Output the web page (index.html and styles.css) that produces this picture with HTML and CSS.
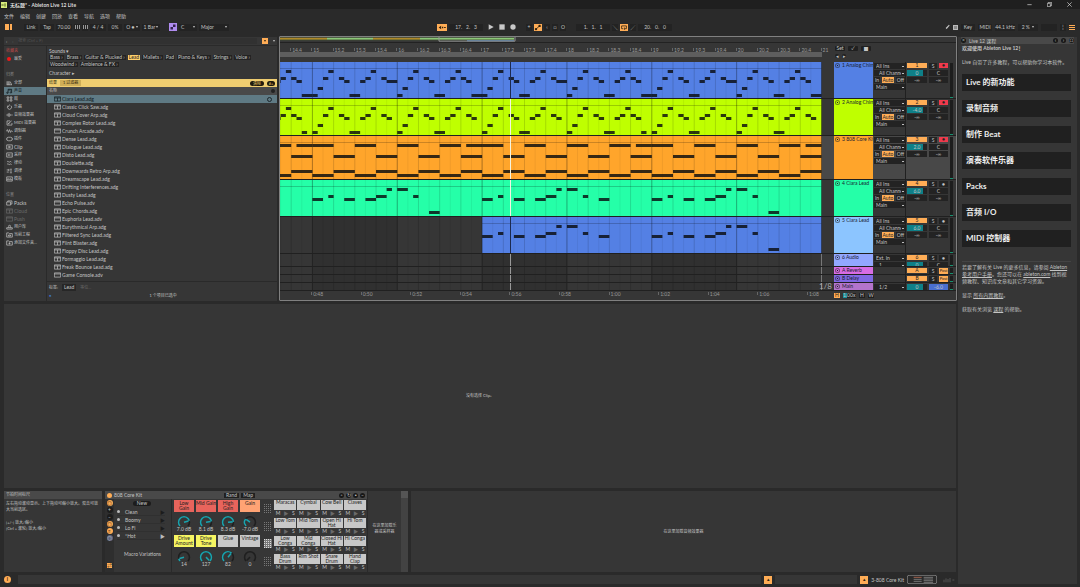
FILE: index.html
```html
<!DOCTYPE html>
<html lang="zh-CN">
<head>
    <meta charset="UTF-8">
    <meta name="viewport" content="width=device-width, initial-scale=1.0">
    <title>无标题* - Ableton Live 12 Lite</title>
    <link rel="stylesheet" href="styles.css">
</head>
<body>
    <svg class="symbols">
        <symbol id="i-all" viewBox="0 0 20 16"><path d="M3 3v10M6 3v10M9 3v10M12 4l4 9M2 13h15"/></symbol>
        <symbol id="i-sound" viewBox="0 0 20 16"><path d="M6 13V3h10v9M6 5h10"/><circle cx="4" cy="13" r="2"/><circle cx="14" cy="12" r="2"/></symbol>
        <symbol id="i-drum" viewBox="0 0 20 16"><path d="M3 2h5v4H3zM12 2h5v4h-5zM3 10h5v4H3zM12 10h5v4h-5z"/></symbol>
        <symbol id="i-inst" viewBox="0 0 20 16"><path d="M6 4a6 6 0 1 0 8 0M6 4l1 4M10 1v3"/></symbol>
        <symbol id="i-fx" viewBox="0 0 20 16"><path d="M1 8h4M6 4v8M9 2v12M12 5v6M15 8h4"/></symbol>
        <symbol id="i-midi" viewBox="0 0 20 16"><path d="M12 2H3v12h14V8M6 10l10-8M6 10h4"/></symbol>
        <symbol id="i-mod" viewBox="0 0 20 16"><path d="M1 9l3-5 3 8 3-8 3 8 3-5 3 3"/></symbol>
        <symbol id="i-plug" viewBox="0 0 20 16"><path d="M7 3h6a5 5 0 0 1 0 10H7a5 5 0 0 1 0-10zM1 8h2M17 8h2"/></symbol>
        <symbol id="i-clip" viewBox="0 0 20 16"><path d="M2 2h16v12H2zM8 5l5 3-5 3z"/></symbol>
        <symbol id="i-sample" viewBox="0 0 20 16"><path d="M2 2h16v12H2zM5 8h2M8 5v6M11 6v4M14 8h2"/></symbol>
        <symbol id="i-groove" viewBox="0 0 20 16"><path d="M3 5c3-5 5 3 8 0s4 0 5 1M3 12c3-5 5 3 8 0s4 0 5 1"/></symbol>
        <symbol id="i-tune" viewBox="0 0 20 16"><path d="M2 5h6M11 3h6M2 11h6M11 8h6M11 13h6M8 2v6"/></symbol>
        <symbol id="i-tpl" viewBox="0 0 20 16"><path d="M2 2h16v12H2zM2 10h16M6 5v3M12 5v3"/></symbol>
        <symbol id="i-packs" viewBox="0 0 20 16"><path d="M2 5h11v9H2zM5 5V2h12v9h-4"/></symbol>
        <symbol id="i-user" viewBox="0 0 20 16"><path d="M2 10h16v4H2zM7 10c3-2 0-3 0-5s6-3 6 0-3 3 0 5"/></symbol>
        <symbol id="i-folder" viewBox="0 0 20 16"><path d="M2 2h6l2 2h8v10H2zM7 8h6v3H7z"/></symbol>
        <symbol id="i-add" viewBox="0 0 20 16"><path d="M2 2h6l2 2h8v10H2zM10 6v6M7 9h6"/></symbol>
        <symbol id="i-rack" viewBox="0 0 20 16"><path d="M1 2h18v12H1zM1 5h18M10 5v9"/></symbol>
        <symbol id="i-preset" viewBox="0 0 20 16"><path d="M1 2h18v12H1zM1 5h18"/></symbol>
    </svg>

    <header>
        <div class="titlebar">
            <svg class="logo" viewBox="0 0 18 18"><path fill="#d8ec7c" d="M0 0h18v18H0z"/><path stroke="#5c6a2c" stroke-width="2" d="M3 6v6M6 6v6M9 6h6M9 9h6M9 12h6"/></svg>
            <h1>无标题* - Ableton Live 12 Lite</h1>
            <div class="window-buttons">
                <button aria-label="最小化"><svg viewBox="0 0 15 15"><path d="M1 8h13"/></svg></button>
                <button aria-label="还原"><svg viewBox="0 0 15 15"><path d="M1 4h9v10H1zM4 4V1h10v10h-4"/></svg></button>
                <button aria-label="关闭"><svg viewBox="0 0 15 15"><path d="M1 1l13 13M14 1L1 14"/></svg></button>
            </div>
        </div>
        <nav class="menubar">
            <button>文件</button><button>编辑</button><button>创建</button><button>回放</button><button>查看</button><button>导航</button><button>选项</button><button>帮助</button>
        </nav>
        <div class="transport">
            <div class="group group-left">
                <button class="layout-btn" aria-label="浏览器"></button>
                <button class="box w14">Link</button>
                <button class="box w14">Tap</button>
                <span class="box w16">70.00</span>
                <button class="box nudge" aria-label="减慢"></button>
                <button class="box nudge" aria-label="加快"></button>
                <span class="box w16">4 / 4</span>
                <span class="box w14">0%</span>
                <button class="box w16">O ● <i class="down"></i></button>
                <button class="box w18">1 Bar <i class="down"></i></button>
                <button class="scale-btn" aria-label="音阶"><svg viewBox="0 0 16 16"><path fill="#33234d" d="M3 8h5v5H3zM8 3h5v5H8z"/></svg></button>
                <button class="box w18 spread">C <i class="down"></i></button>
                <button class="box w30 spread">Major <i class="down"></i></button>
            </div>
            <div class="group">
                <button class="on follow" aria-label="跟随"><svg viewBox="0 0 24 16"><path fill="#30210d" d="M4 8l6-4v8zM12 6h3v4h-3zM17 7h4v2h-4z"/></svg></button>
                <span class="box w34">17. &nbsp; 2. &nbsp; 3</span>
                <button class="play" aria-label="播放"><svg viewBox="0 0 18 18"><path d="M2 1l15 8-15 8z"/></svg></button>
                <button class="play" aria-label="停止"><svg viewBox="0 0 18 18"><path d="M1 1h16v16H1z"/></svg></button>
                <button class="play" aria-label="录音"><svg viewBox="0 0 18 18"><circle cx="9" cy="9" r="8"/></svg></button>
                <button class="box gap-left">+</button>
                <button class="on" aria-label="自动化"><svg viewBox="0 0 20 16"><path fill="none" stroke="#30210d" stroke-width="2" d="M4 13L15 3"/><circle fill="#30210d" cx="5" cy="12" r="3"/><circle fill="#30210d" cx="14" cy="4" r="3"/></svg></button>
                <button class="box">‹</button>
                <button class="box">□</button>
                <button class="box">O</button>
                <span class="box w34 gap-left">1. &nbsp; 1. &nbsp; 1</span>
                <button class="box">╲</button>
                <button class="on" aria-label="循环"><svg viewBox="0 0 20 16"><path fill="none" stroke="#30210d" stroke-width="2" d="M8 11H4V4h12v7h-4M11 8v6"/></svg></button>
                <button class="box">╱</button>
                <span class="box w34">20. &nbsp; 0. &nbsp; 0</span>
            </div>
            <div class="group group-right">
                <button class="pen" aria-label="绘制"><svg viewBox="0 0 14 16"><path d="M2 14l2-5 7-7 2 2-7 8z"/></svg></button>
                <button class="keys" aria-label="键盘"></button>
                <button class="box w14">Key</button>
                <button class="box w14">MIDI</button>
                <button class="box w20">44.1 kHz</button>
                <button class="box w20">2 % &nbsp;<i class="down"></i></button>
                <span class="box w16"></span>
                <button class="box">¦</button>
                <button class="hamburger" aria-label="帮助视图"><svg viewBox="0 0 18 15"><path fill="#ffad56" d="M0 0h18v3H0zM0 6h18v3H0zM0 12h18v3H0z"/></svg></button>
            </div>
        </div>
    </header>

    <div class="workspace">
        <main>
            <div class="top-row">
                <section class="browser">
                    <div class="search">
                        <button>‹</button><button class="dim">›</button>
                        <input type="text" aria-label="搜索" placeholder="搜索 (Ctrl + F)">
                        <button class="filter-btn" aria-label="筛选"><i class="down"></i></button>
                        <button aria-label="更多"><i class="down"></i></button>
                    </div>
                    <div class="browser-body">
                        <aside class="sidebar">
                            <h2 class="red">收藏夹</h2>
                            <a href="#" class="side-link"><i class="fav"></i>最爱</a>
                            <h2 class="section">归类</h2>
                            <div id="categories"></div>
                            <h2 class="section">位置</h2>
                            <div id="places"></div>
                        </aside>
                        <div class="results">
                            <div class="filters">
                                <h2>Sounds ▾</h2>
                                <div class="chips">
                                    <button>Bass ›</button><button>Brass ›</button><button>Guitar &amp; Plucked ›</button><button class="active">Lead</button><button>Mallets ›</button><button>Pad</button><button>Piano &amp; Keys ›</button><button>Strings ›</button><button>Voice ›</button><button>Woodwind ›</button><button>Ambience &amp; FX ›</button>
                                </div>
                                <h2>Character ▸</h2>
                            </div>
                            <div class="result-bar">
                                <span>结果</span><span class="count">1 过滤器</span>
                                <button class="clear">清除</button><button>#+</button>
                            </div>
                            <div class="name-head"><span>名称</span><i class="dot"></i></div>
                            <ul class="files" id="files"></ul>
                            <div class="tags"><span>标签:</span><b>Lead</b><span class="dim">等位...</span></div>
                            <div class="status"><button aria-label="试听">●</button><span>1 个项目已选中</span></div>
                        </div>
                    </div>
                </section>

                <section class="arrangement">
                    <svg class="overview" viewBox="0 0 676 6" preserveAspectRatio="none">
                        <path fill="#4a5b38" d="M0 1h234v3H0z"/>
                        <path fill="#b08a28" d="M0 1h47v2H0zM93 1h47v2H93z"/>
                        <path fill="#8cc878" d="M47 1h46v2H47zM140 1h94v2h-94z"/>
                        <path fill="#5b8cc0" d="M187 4h47v1h-47z"/>
                        <path fill="none" stroke="#999" d="M159 0v5h76V0"/>
                    </svg>
                    <div class="ruler-row">
                        <div class="rulers">
                            <div class="ruler" id="beats"></div>
                            <div class="loop"></div>
                        </div>
                        <div class="locators">
                            <button>Set</button><button>✓</button><button>■</button>
                            <div><button>◂</button><button>▸</button></div>
                        </div>
                    </div>
                    <div id="tracks" class="tracks"></div>
                    <div class="ruler-row">
                        <div class="ruler time" id="seconds"></div>
                        <div class="zoom-row"><button class="on">H</button><span class="speed">1.00x</span><button>H</button><button>W</button></div>
                    </div>
                    <span class="grid-size">1/8</span>
                </section>
            </div>

            <section class="clip-view">没有选择 Clip。</section>

            <div class="devices">
                <section class="info">
                    <h2>节拍时间标尺</h2>
                    <p>左右拖动滚动显示。上下拖动可缩小放大。双击可放大当前选区。</p>
                    <p>[+/-] 放大/缩小<br>[Ctrl + 滚轮] 放大/缩小</p>
                </section>
                <section class="rack">
                    <div class="device">
                        <div class="device-head">
                            <i class="led"></i><h2>808 Core Kit</h2>
                            <button class="rand">Rand</button><button>Map</button>
                            <div class="head-icons"><button aria-label="比较">◦</button><button aria-label="热交换">↻</button><button aria-label="保存">▪</button><button aria-label="更多">–</button></div>
                        </div>
                        <div class="device-body">
                            <div class="rail">
                                <button class="r-on">◎</button><button>+</button><button>–</button><button class="r-on">◎</button><button class="r-on">≡</button><button class="r-blue">◎</button><button class="r-sq">⇄</button>
                            </div>
                            <div class="variations">
                                <button class="new">New</button>
                                <ul>
                                    <li><i></i>Clean<b>▶</b></li>
                                    <li><i></i>Boomy<b>▶</b></li>
                                    <li><i></i>Lo Fi<b>▶</b></li>
                                    <li><i></i>*Hot<b class="lit">▶</b></li>
                                </ul>
                                <p>Macro Variations</p>
                            </div>
                            <div class="macros" id="macros"></div>
                            <div class="pad-map"><i></i><i></i><i class="lit"></i><i></i></div>
                            <div class="pads" id="pads"></div>
                        </div>
                    </div>
                    <p class="drop">在这里加载乐器或采样器</p>
                    <div class="rack-end"></div>
                </section>
                <section class="effects">在这里加载音频效果器</section>
            </div>
        </main>

        <aside class="lessons">
            <div class="lessons-head"><button aria-label="关闭">×</button><h2>Live 12 课程</h2><button>‹</button><button>›</button><button>⌂</button></div>
            <div class="lessons-body">
                <h3>欢迎使用 Ableton Live 12！</h3>
                <p>Live 自带了许多教程，可以帮助你学习本软件。</p>
                <nav>
                    <a href="#">Live 的新功能</a>
                    <a href="#">录制音频</a>
                    <a href="#">制作 Beat</a>
                    <a href="#">演奏软件乐器</a>
                    <a href="#">Packs</a>
                    <a href="#">音频 I/O</a>
                    <a href="#">MIDI 控制器</a>
                </nav>
                <div class="more">
                    <p>若要了解有关 Live 的更多信息，请参阅 <a href="#">Ableton 参考用户手册</a>。您还可以在 <a href="#">ableton.com</a> 找到视频教程、知识库文章和其它学习资源。</p>
                    <p>显示 <a href="#">所有内置教程</a>。</p>
                    <p>获取有关浏览 <a href="#">课程</a> 的帮助。</p>
                </div>
            </div>
        </aside>
    </div>

    <footer>
        <button class="info-btn">i</button>
        <div class="message"></div>
        <button class="view-btn" aria-label="Clip 视图">▴</button>
        <div class="message short"></div>
        <button class="view-btn" aria-label="设备视图">▴</button>
        <span>3-808 Core Kit</span>
        <svg class="chain" viewBox="0 0 90 27"><rect x="1" y="1" width="88" height="25" rx="5"/><path stroke="#d9785a" d="M20 7h24"/><path d="M20 13h24M20 19h24M50 7h28M50 12h28M50 17h28M50 22h28"/></svg>
        <svg class="bars" viewBox="0 0 36 18"><path d="M3 16V8M9 16V4M15 16V6M21 16V3M28 9h6"/></svg>
    </footer>
    <script src="script.js"></script>
</body>
</html>
```
FILE: styles.css
```css
:root{
    --bg : #2a2a2a;
    --panel : #363636;
    --head : #494949;
    --dark : #1f1f1f;
    --text : #c4c4c4;
    --dim : #6a6a6a;
    --orange : #ffad56;
    --teal : #0e8088;
    --select : #5f7a84;
    --yellow : #efcd70;
}

*{
    padding: 0;
    margin: 0;
    box-sizing: border-box;
}

ul{
    list-style: none;
}

a{
    color: inherit;
}

button, input, select{
    font: inherit;
    color: inherit;
    background: none;
    border: 0;
    border-radius: 0;
    outline: 0;
    appearance: none;
}

h1, h2, h3{
    font: inherit;
}

body{
    display: flex;
    flex-direction: column;
    min-height: 100vh;
    background: var(--bg);
    color: var(--text);
    font: 4px/8px Lato, "Noto Sans CJK SC", sans-serif;
}

/* latin labels run one size up */
.transport, .filters, .files, .latin, .tags b, .arrangement, .device, footer{
    font-size: 5px;
}

.symbols{
    display: none;
}

.down{
    display: inline-block;
    border: 1px solid transparent;
    border-top: 2px solid currentColor;
    border-bottom: 0;
    vertical-align: middle;
}

.dim{
    color: var(--dim);
}

/* title, menu, transport */
.titlebar{
    display: flex;
    align-items: center;
    height: 9px;
    padding: 0 5px 0 1px;
    gap: 3px;
    background: var(--dark);
    color: #ddd;
    font-size: 5px;
    font-weight: 700;
}

.logo{
    width: 6px;
    height: 6px;
}

.window-buttons{
    display: flex;
    gap: 15px;
    margin-left: auto;
    padding-right: 3px;
}

.window-buttons button{
    display: flex;
}

.window-buttons svg{
    width: 5px;
    height: 5px;
    fill: none;
    stroke: #ddd;
    stroke-width: 2;
}

.menubar{
    display: flex;
    height: 12px;
    padding: 1px 4px 0;
    gap: 6px;
    font-size: 5px;
}

.transport{
    display: flex;
    height: 15px;
    padding: 2px 5px 5px;
    gap: 4px;
    text-align: center;
}

.group{
    display: flex;
    align-items: center;
    gap: 2px;
}

.group-left{
    width: 40%;
}

.group-right{
    margin-left: auto;
    gap: 3px;
}

.box{
    min-width: 6px;
    height: 7px;
    line-height: 7px;
    background: #232323;
    white-space: nowrap;
}

.w14{ width: 14px; }
.w16{ width: 16px; }
.w18{ width: 18px; }
.w20{ width: 20px; }
.w30{ width: 30px; }
.w34{ width: 34px; }

.spread{
    display: flex;
    align-items: center;
    justify-content: space-between;
    padding: 0 2px;
}

.gap-left{
    margin-left: 8px;
}

.layout-btn{
    width: 7px;
    height: 6px;
    margin-right: 10px;
    background: linear-gradient(90deg, var(--orange) 4px, var(--bg) 4px 5px, var(--orange) 5px);
}

.nudge{
    background: repeating-linear-gradient(90deg, #999 0 1px, #232323 1px 2px) center/5px 4px no-repeat #232323;
}

.scale-btn{
    width: 8px;
    height: 8px;
    margin-left: 7px;
    background: #b08cf0;
}

.transport svg{
    display: block;
    width: 100%;
    height: 100%;
    fill: #c8c8c8;
}

.on{
    width: 8px;
    height: 7px;
    background: var(--orange);
    color: #30210d;
}

.transport .follow{
    width: 10px;
}

.play{
    width: 6px;
    height: 6px;
    margin-left: 3px;
}

.pen{
    width: 5px;
    height: 6px;
}

.keys{
    width: 5px;
    height: 5px;
    border: 1px solid #bbb;
    background: #888;
}

.hamburger{
    width: 6px;
    height: 5px;
}

/* main split */
.workspace{
    display: flex;
    flex: 1;
    gap: 1px;
    padding: 0 3px 0 4px;
}

main{
    display: flex;
    flex-direction: column;
    flex: 1;
    min-width: 0;
    gap: 3px;
}

.top-row{
    display: flex;
    gap: 2px;
}

/* browser */
.browser{
    display: flex;
    flex-direction: column;
    width: 273px;
    margin-top: 1px;
    background: var(--panel);
}

.search{
    display: flex;
    align-items: center;
    height: 9px;
    padding: 0 2px;
    gap: 5px;
    border-bottom: 1px solid var(--bg);
}

.search input{
    flex: 1;
    height: 6px;
    background: #313131;
}

.search input::placeholder{
    color: #555;
}

.filter-btn{
    width: 6px;
    height: 6px;
    background: var(--orange);
    color: #30210d;
    line-height: 4px;
}

.search button{
    line-height: 5px;
}

.browser-body{
    display: flex;
    flex: 1;
}

.sidebar{
    width: 43px;
    padding-top: 1px;
    border-right: 1px solid var(--bg);
}

.sidebar h2{
    padding-left: 2px;
    color: #888;
}

.sidebar .red{
    color: #b84848;
}

.sidebar .section{
    padding-top: 8px;
}

.side-link{
    display: flex;
    align-items: center;
    height: 8px;
    padding-left: 2px;
    gap: 1px;
    text-decoration: none;
    white-space: nowrap;
}

.side-link.active{
    background: var(--select);
    color: #10181c;
}

.fav{
    width: 4px;
    height: 4px;
    margin: 0 2px 0 1px;
    border-radius: 50%;
    background: #f01818;
}

.icon{
    flex: none;
    width: 7px;
    height: 6px;
    fill: none;
    stroke: currentColor;
    stroke-width: 2;
}

.results{
    flex: 1;
    min-width: 0;
}

.filters{
    height: 33px;
    padding: 1px 2px 0;
}

.chips{
    display: flex;
    flex-wrap: wrap;
    gap: 2px;
    padding: 0 14px 2px 0;
}

.chips button{
    height: 5px;
    padding: 0 1px;
    background: #232323;
    line-height: 5px;
}

.chips .active{
    background: #ffcf6a;
    color: #222;
}

.result-bar{
    display: flex;
    align-items: center;
    height: 8px;
    padding: 0 2px;
    gap: 3px;
    background: var(--yellow);
    color: #33280c;
}

.result-bar .count{
    padding: 0 3px;
    background: #cfae58;
    line-height: 6px;
}

.result-bar button{
    width: 8px;
    height: 5px;
    border-radius: 3px;
    background: #1f1a0d;
    color: var(--yellow);
    line-height: 5px;
}

.result-bar .clear{
    width: 14px;
    margin-left: auto;
}

.name-head{
    display: flex;
    align-items: center;
    justify-content: space-between;
    height: 8px;
    padding: 0 2px;
    background: var(--head);
}

.dot{
    width: 4px;
    height: 4px;
    border-radius: 50%;
    background: #222;
}

.files{
    height: 187px;
    overflow: hidden;
    border-bottom: 1px solid var(--bg);
}

.files li{
    display: flex;
    align-items: center;
    height: 8px;
    padding: 0 5px 0 7px;
    gap: 1px;
}

.files .active{
    background: var(--select);
    color: #10181c;
}

.files .swap{
    width: 5px;
    height: 5px;
    margin-left: auto;
    border: 1px solid #1c262b;
    border-radius: 50%;
}

.tags{
    display: flex;
    gap: 4px;
    padding: 2px 2px 0;
    line-height: 7px;
}

.tags b{
    padding: 0 2px;
    background: #272727;
    font-weight: 400;
}

.status{
    display: flex;
    padding: 1px 2px 0;
}

.status button{
    color: #3d73c4;
}

.status span{
    flex: 1;
    text-align: center;
}

/* arrangement */
.arrangement{
    position: relative;
    flex: 1;
    min-width: 0;
    border: 1px solid #808080;
    border-radius: 1px;
    background: var(--panel);
}

.overview{
    display: block;
    width: 100%;
    height: 6px;
    border-bottom: 1px solid #222;
}

.ruler-row, .track{
    display: grid;
    grid-template-columns: minmax(0, 1fr) 122px;
    column-gap: 1px;
}

.track{
    grid-template-columns: minmax(0, 1fr) 39px 32px 42px 6px;
    height: 37px;
    border-bottom: 1px solid #202020;
}

.ruler{
    display: flex;
    height: 9px;
    color: #999;
}

.ruler span{
    flex: 21.2 0 0;
    min-width: 0;
    height: 3px;
    margin-top: 5px;
    padding-left: 1px;
    border-left: 1px solid #666;
    line-height: 4px;
}

.time span{
    margin-top: 1px;
}

.ruler span:first-child{
    border: 0;
    padding: 0;
}

.loop{
    width: 98%;
    height: 5px;
    background: #5e5e5e;
}

.locators{
    display: flex;
    flex-wrap: wrap;
    align-content: flex-start;
    gap: 3px;
    height: 19px;
    padding: 3px 1px 0;
}

.locators button{
    min-width: 10px;
    height: 5px;
    border-radius: 1px;
    background: #202020;
    line-height: 5px;
}

.locators div{
    display: flex;
    width: 100%;
    gap: 3px;
}

.locators div button{
    min-width: 4px;
    height: 4px;
    line-height: 4px;
    border-radius: 2px;
}

.track-3{
    height: 44px;
    background: #484848;
}

.track-6{
    height: 13px;
}

.track-A, .track-B, .track-M{
    height: 8px;
}

.lane{
    display: block;
    width: 100%;
    height: 100%;
}

.track-name{
    display: flex;
    gap: 2px;
    padding-left: 1px;
    overflow: hidden;
    color: #182030;
    white-space: nowrap;
    line-height: 7px;
}

.track-name i{
    flex: none;
    width: 5px;
    height: 5px;
    margin-top: 1px;
    border: 1px solid #2228;
    border-radius: 50%;
    background: radial-gradient(#222 1px, transparent 1px);
}

.io{
    overflow: hidden;
    border-right: 1px solid #202020;
}

.io select{
    display: block;
    width: 100%;
    height: 6px;
    margin-top: 1px;
    padding: 0 4px 0 2px;
    background: linear-gradient(#bbb, #bbb) right 1px center/2px 1px no-repeat #232323;
    line-height: 6px;
}

.io .channel{
    padding-left: 5px;
}

.monitor{
    display: flex;
    justify-content: space-between;
    margin-top: 1px;
    line-height: 6px;
}

.monitor button{
    padding: 0 1px;
    background: #232323;
    line-height: 6px;
}

.monitor .auto{
    background: var(--orange);
    color: #222;
}

.mixer{
    display: grid;
    grid-template-columns: 20px 8px 9px;
    grid-auto-rows: 6px;
    gap: 1px 2px;
    padding-top: 1px;
    overflow: hidden;
    text-align: center;
    line-height: 6px;
}

.mixer > *{
    height: 6px;
    background: #232323;
    line-height: 6px;
}

.mixer .number{
    height: 5px;
    background: var(--orange);
    color: #222;
    line-height: 5px;
}

.mixer .armed{
    height: 5px;
    background: #f03a4c;
    color: #222;
    line-height: 5px;
}

.mixer .post{
    background: var(--orange);
    color: #222;
    font-size: 4px;
}

.mixer .volume{
    background: linear-gradient(90deg, var(--teal) 16px, #232323 16px);
}

.mixer .pan{
    grid-column: 2 / 4;
}

.mixer .cue{
    background: #4a6fd0;
}

.meter{
    margin: 1px 3px 0 0;
    background: #1d1d1d;
    border-bottom: 1px solid #1a9070;
}

.zoom-row{
    display: flex;
    gap: 3px;
    padding-top: 2px;
}

.zoom-row button, .speed{
    width: 6px;
    height: 5px;
    background: #202020;
    line-height: 5px;
}

.zoom-row .on{
    background: var(--orange);
}

.zoom-row .speed{
    width: 13px;
    background: linear-gradient(90deg, #18909c 4px, #202020 4px);
}

.grid-size{
    position: absolute;
    right: 124px;
    bottom: 10px;
    color: #aaa;
    font-size: 8px;
}

/* clip + devices */
.clip-view{
    display: flex;
    align-items: center;
    justify-content: center;
    flex: 1;
    margin-right: 1px;
    background: var(--panel);
}

.devices{
    display: flex;
    gap: 3px;
    height: 81px;
    margin-right: 1px;
}

.info{
    width: 98px;
    background: var(--panel);
    line-height: 6px;
}

.info h2, .device-head{
    height: 8px;
    padding-left: 2px;
    background: var(--head);
    line-height: 8px;
}

.info p{
    padding: 2px 2px 5px;
}

.rack{
    display: flex;
    background: var(--panel);
}

.device{
    width: 262px;
}

.device-head{
    display: flex;
    align-items: center;
    gap: 2px;
}

.led{
    width: 5px;
    height: 5px;
    border-radius: 50%;
    background: var(--orange);
}

.device-head > button{
    height: 5px;
    padding: 0 2px;
    background: #202020;
    line-height: 5px;
}

.device-head .rand{
    margin-left: auto;
}

.head-icons{
    display: flex;
    justify-content: flex-end;
    gap: 2px;
    width: 110px;
    padding-right: 2px;
}

.head-icons button, .lessons-head button{
    width: 5px;
    height: 5px;
    border-radius: 50%;
    background: #181818;
    line-height: 5px;
}

.device-body{
    display: flex;
    height: 73px;
}

.rail{
    display: flex;
    flex-direction: column;
    align-items: center;
    width: 9px;
    padding: 1px 0 4px;
    gap: 1px;
    background: #2e2e2e;
}

.rail button{
    width: 6px;
    height: 6px;
    border-radius: 50%;
    background: #1c1c1c;
    line-height: 5px;
}

.rail .r-on{
    background: var(--orange);
    color: #30210d;
}

.rail .r-blue{
    background: #5b6480;
}

.rail .r-sq{
    width: 5px;
    height: 5px;
    margin-top: auto;
    border-radius: 0;
    background: var(--orange);
    color: #30210d;
}

.variations{
    width: 58px;
    padding: 2px 6px 0 3px;
    border-right: 1px solid var(--bg);
    text-align: center;
}

.new{
    display: block;
    width: 18px;
    height: 5px;
    margin: 0 0 2px 16px;
    border-radius: 3px;
    background: #1c1c1c;
    line-height: 5px;
}

.variations li{
    display: flex;
    align-items: center;
    height: 8px;
    gap: 5px;
    border-bottom: 1px solid #303030;
}

.variations li i{
    width: 3px;
    height: 3px;
    border-radius: 50%;
    background: #bbb;
}

.variations b{
    margin-left: auto;
    color: #1c1c1c;
}

.variations .lit{
    color: #bbb;
}

.variations p{
    padding: 10px 0 0 3px;
    white-space: nowrap;
}

.macros{
    display: grid;
    grid-template-columns: repeat(4, 20px);
    grid-auto-rows: 34px;
    gap: 1px 2px;
    padding: 1px 2px;
    text-align: center;
}

.macro h3, .pad h3{
    height: 12px;
    padding-top: 1px;
    background: #c8c8c8;
    color: #222;
    line-height: 5px;
}

.macro .red{ background: #e8645c; }
.macro .peach{ background: #ffa374; }
.macro .yellow{ background: #f6f562; }

.macro svg{
    display: block;
    width: 14px;
    height: 12px;
    margin: 3px auto 0;
    fill: none;
    stroke: #1f1f1f;
    stroke-width: 2;
}

.macro svg .value{
    stroke: #1aa3ae;
}

.macro p{
    line-height: 5px;
}

.pad-map{
    display: flex;
    flex-direction: column;
    justify-content: space-around;
    padding: 1px 1px 2px 2px;
}

.pad-map i{
    width: 8px;
    height: 9px;
    background: repeating-linear-gradient(90deg, transparent 0 1px, var(--panel) 1px 2px), repeating-linear-gradient(#777 0 1px, var(--panel) 1px 2px);
}

.pad-map .lit{
    background: repeating-linear-gradient(90deg, transparent 0 1px, #777 1px 2px), repeating-linear-gradient(#ddd 0 1px, #777 1px 2px);
}

.pads{
    display: grid;
    flex: 1;
    grid-template-columns: repeat(4, 1fr);
    gap: 1px;
    padding: 1px;
    text-align: center;
}

.pad h3{
    height: 10px;
    padding: 0;
}

.pad div{
    display: flex;
    justify-content: space-around;
    line-height: 6px;
}

.pad button{
    line-height: 6px;
}

.drop{
    width: 34px;
    padding: 32px 4px 0;
    border-left: 1px solid var(--bg);
    text-align: center;
    line-height: 6px;
}

.rack-end{
    width: 7px;
    background: linear-gradient(#555 7px, #434343 7px);
}

.effects{
    display: flex;
    align-items: center;
    justify-content: center;
    flex: 1;
    background: var(--panel);
}

/* lessons */
.lessons{
    width: 119px;
    margin-top: 1px;
    margin-bottom: -12px;
    background: var(--panel);
    font-size: 5px;
}

.lessons-head{
    display: flex;
    align-items: center;
    height: 7px;
    margin: 0 3px;
    gap: 3px;
    background: var(--head);
}

.lessons-head h2{
    flex: 1;
}

.lessons-body{
    padding: 1px 6px 0 4px;
    line-height: 7px;
}

.lessons h3{
    font-weight: 700;
}

.lessons-body > p{
    padding: 7px 0 8px;
}

.lessons nav{
    display: flex;
    flex-direction: column;
    gap: 9px;
    padding-bottom: 14px;
}

.lessons nav a{
    padding-left: 4px;
    background: #202020;
    color: #eee;
    font-size: 8px;
    font-weight: 700;
    line-height: 17px;
    text-decoration: none;
}

.more{
    padding-top: 2px;
    border-top: 1px solid #444;
}

.more p{
    padding-bottom: 7px;
}

/* status bar */
footer{
    display: flex;
    align-items: center;
    height: 15px;
    padding: 0 125px 0 4px;
    gap: 3px;
}

footer .info-btn{
    width: 7px;
    height: 7px;
    border-radius: 50%;
    background: var(--orange);
    color: #30210d;
    font-weight: 700;
    line-height: 7px;
}

.message{
    flex: 1;
    height: 9px;
    margin-left: 4px;
    background: var(--panel);
}

.message.short{
    flex: none;
    width: 82px;
    margin: 0;
}

.view-btn{
    width: 8px;
    height: 8px;
    background: var(--orange);
    color: #30210d;
    line-height: 7px;
}

.chain{
    width: 30px;
    height: 9px;
    fill: none;
    stroke: #999;
    stroke-width: 2;
}

.bars{
    width: 12px;
    height: 6px;
    margin-left: 3px;
    stroke: #666;
    stroke-width: 2;
}
```
FILE: script.js
```js
const categories = [['all', '全部'], ['sound', '声音', 'active'], ['drum', '鼓'], ['inst', '乐器'], ['fx', '音频效果器'], ['midi', 'MIDI 效果器'], ['mod', '调制器'], ['plug', '插件'], ['clip', 'Clip', 'latin'], ['sample', '采样'], ['groove', '律动'], ['tune', '调律'], ['tpl', '模板']];
const places = [['packs', 'Packs', 'latin'], ['rack', 'Cloud', 'latin dim'], ['preset', 'Push', 'latin dim'], ['user', '用户库'], ['folder', '当前工程'], ['add', '添加文件夹...']];
const files = ['Ciara Lead.adg', 'Classic Click Saw.adg', 'Cloud Cover Arp.adg', 'Complex Rotor Lead.adg', 'Crunch Arcade.adv', 'Dense Lead.adg', 'Dialogue Lead.adg', 'Disto Lead.adg', 'Doublette.adg', 'Downwards Retro Arp.adg', 'Dreamscape Lead.adg', 'Drifting Interferences.adg', 'Dusty Lead.adg', 'Echo Pulse.adv', 'Epic Chords.adg', 'Euphoria Lead.adv', 'Eurythmical Arp.adg', 'Filtered Sync Lead.adg', 'Flint Blaster.adg', 'Floppy Disc Lead.adg', 'Formaggio Lead.adg', 'Freak Bounce Lead.adg', 'Game Console.adv'];

// lane geometry, in lane units
const LANE = 553;
const BAR = 84.85;
const BEAT = BAR / 4;
const STEP = BAR / 16;
const END = 541.5;
const barX = bar => 32.4 + (bar - 15) * BAR;

const $ = id => document.getElementById(id);
const icon = name => `<svg class="icon"><use href="#i-${name}"/></svg>`;
const sideLink = ([name, label, state = '']) => `<a href="#" class="side-link ${state}">${icon(name)}${label}</a>`;

$('categories').innerHTML = categories.map(sideLink).join('');
$('places').innerHTML = places.map(sideLink).join('');
$('files').innerHTML = files.map((file, i) =>
    `<li class="${i ? '' : 'active'}">${icon(file.endsWith('adv') ? 'preset' : 'rack')}${file}${i ? '' : '<i class="swap"></i>'}</li>`).join('');

// notes are [bar, first step, length in steps, y]
function arpNotes(second){
    const notes = [];
    for(let bar = 14; bar <= 20; bar++){
        const turn = second ? bar % 4 == 2 : bar % 2 == 0;
        notes.push([bar, 0, 1, 33], [bar, 1, 1, 26], [bar, 2, 1, 16], [bar, 3, 1, 9], [bar, 5, 1, 16], [bar, 6, 1, 19], [bar, 7, 2, 33], [bar, 9, 1, 19], [bar, 10, 1, 16], [bar, 11, 1, 9]);
        if(turn){
            notes.push([bar, 12, 1, 16], [bar, 13, 1, 19], [bar, 14, second ? 1 : 2, 33]);
        }else{
            notes.push([bar, 13, 1, 16], [bar, 14, second ? 1 : 2, 19]);
        }
    }
    return notes;
}

function drumNotes(){
    const notes = [];
    for(let bar = 14; bar <= 20; bar++){
        notes.push([bar, 0, 4, 9], [bar, 8, 4, 9], [bar, 0, 4, 39], [bar, 8, 4, 39]);
        notes.push([bar, 4, 4, 20], [bar, 12, 4, 20], [bar, 4, 4, 35], [bar, 12, 4, 35]);
        if(bar % 2 == 0) notes.push([bar, 13, 3, 9]);
    }
    return notes;
}

function leadNotes(from){
    const notes = [];
    for(let bar = from; bar <= 20; bar += 2){
        notes.push([bar, 0, 2, 19], [bar, 3, 1, 16], [bar, 6, 2, 19], [bar, 10, 2, 19], [bar, 12, 2, 16], [bar, 14, 1, 9]);
        notes.push([bar + 1, 0, 2, 9], [bar + 1, 3, 1, 16], [bar + 1, 6, 2, bar == 17 ? 19 : 32]);
    }
    return notes;
}

const tracks = [
    {id: '1', name: '1 Analog Chime', color: '#5480e4', clip: '#5480e4', height: 36, notes: arpNotes(false), vol: '0', armed: true},
    {id: '2', name: '2 Analog Chime', color: '#bfff00', clip: '#bfff00', height: 36, notes: arpNotes(true), vol: '-4.0', armed: true},
    {id: '3', name: '3 808 Core Kit', color: '#ffa52b', clip: '#ffa52b', height: 43, notes: drumNotes(), vol: '2.0', armed: true},
    {id: '4', name: '4 Ciara Lead', color: '#25ffa8', clip: '#25ffa8', height: 36, notes: leadNotes(15), vol: '6.0'},
    {id: '5', name: '5 Ciara Lead', color: '#8cc5ff', clip: '#5480e4', height: 36, notes: leadNotes(17), start: 17, vol: '6.0'},
    {id: '6', name: '6 Audio', color: '#92a7ff', height: 12, vol: '0'},
    {id: 'A', name: 'A Reverb', color: '#d86ce4', height: 7},
    {id: 'B', name: 'B Delay', color: '#8068e4', height: 7},
    {id: 'M', name: 'Main', color: '#b474cc', height: 7}
];

function lane(track){
    const h = track.height;
    const left = track.start ? barX(track.start) : 0;
    let out = '';
    for(let bar = 15; bar < 21; bar += 2){
        out += `<rect x="${barX(bar)}" width="${BAR}" height="${h}" fill="#303030"/>`;
    }
    if(track.clip) out += `<rect x="${left}" width="${END - left}" height="${h}" fill="${track.clip}"/>`;
    for(let i = 0, x = barX(14); x < END; i++, x += BEAT / 2){
        if(x < 0) continue;
        out += `<path stroke="#000" stroke-opacity="${i % 8 == 0 ? .32 : i % 2 == 0 ? .14 : .06}" d="M${x} 0v${h}"/>`;
    }
    if(track.clip) out += `<path stroke="#000" stroke-opacity=".2" d="M${left} 6.500h${END - left}"/>`;
    (track.notes || []).forEach(([bar, step, length, y]) => {
        const x = Math.max(barX(bar) + step * STEP, 0);
        const right = Math.min(barX(bar) + (step + length) * STEP, END);
        if(right > x) out += `<rect x="${x}" y="${y - 1}" width="${right - x}" height="3" fill="#0a0c10" fill-opacity=".82"/>`;
    });
    const playhead = !track.clip ? '#999' : track.clip == '#5480e4' ? '#1c2a50' : '#f4f4e0';
    out += `<path stroke="${playhead}" d="M230.5 0v${h}"/>`;
    if(!track.clip) out += `<path stroke="#777" d="M${END} 0v${h}"/>`;
    return `<svg class="lane" viewBox="0 0 ${LANE} ${h}" preserveAspectRatio="none">${out}</svg>`;
}

const select = (label, value, name = '') => `<select class="${name}" aria-label="${label}"><option>${value}</option></select>`;

function io(track){
    if(track.id == 'A' || track.id == 'B') return '';
    if(track.id == 'M') return select('输出', '1/2', 'channel');
    if(track.id == '6') return select('输入', 'Ext. In') + select('声道', '1', 'channel');
    return select('输入', 'All Ins') + select('声道', 'All Channels', 'channel')
        + '<div class="monitor"><button>In</button><button class="auto">Auto</button><button>Off</button></div>'
        + select('输出', 'Main');
}

function mixer(track){
    if(track.id == 'M') return '<span class="volume">0</span><span class="pan cue">-6.0</span>';
    const number = `<button class="number">${track.id}</button><button>S</button>`;
    if(track.vol === undefined) return number + '<button class="post">Post</button>';
    return number + `<button class="${track.armed ? 'armed' : ''}">●</button>`
        + `<span class="volume">${track.vol}</span><span class="pan">C</span>`
        + (track.clip ? '<span>-∞</span><span class="pan">-∞</span>' : '');
}

$('tracks').innerHTML = tracks.map(track => `
    <div class="track track-${track.id}">
        ${lane(track)}
        <div class="track-name" style="background:${track.color}"><i></i>${track.name}</div>
        <div class="io">${io(track)}</div>
        <div class="mixer">${mixer(track)}</div>
        <div class="meter"></div>
    </div>`).join('');

// beat ruler
let beats = `<span style="flex-grow:${barX(15) - BEAT}"></span><span>14.4</span>`;
for(let bar = 15; bar < 21; bar++){
    beats += `<span>${bar}</span><span>${bar}.2</span><span>${bar}.3</span><span>${bar}.4</span>`;
}
$('beats').innerHTML = beats + `<span style="flex-grow:${LANE - END}">21</span>`;

// time ruler, a mark every two seconds
let seconds = `<span style="flex-grow:${barX(15)}"></span>`;
for(let s = 48; s <= 68; s += 2){
    const label = Math.floor(s / 60) + ':' + String(s % 60).padStart(2, '0');
    seconds += `<span style="flex-grow:${s == 68 ? 25 : 49.5}">${label}</span>`;
}
$('seconds').innerHTML = seconds;

const macros = [['Low Gain', '7.0 dB', 78, 'red'], ['Mid Gain', '8.1 dB', 80, 'red'], ['High Gain', '8.3 dB', 82, 'red'], ['Gain', '-7.0 dB', 30, 'peach'], ['Drive Amount', '14', 11, 'yellow'], ['Drive Tone', '127', 100, 'yellow'], ['Glue', '82', 65, ''], ['Vintage', '0', 0, '']];
const arc = 'M5 15A7 7 0 1 1 15 15';

$('macros').innerHTML = macros.map(([name, value, amount, color]) => `
    <div class="macro">
        <h3 class="${color}">${name}</h3>
        <svg viewBox="1 1 18 15"><path d="${arc}"/>${amount ? `<path class="value" pathLength="100" stroke-dasharray="${amount} 200" d="${arc}"/>` : ''}<path class="${amount ? 'value' : ''}" d="M10 10v6" transform="rotate(${45 + amount * 2.7} 10 10)"/></svg>
        <p>${value}</p>
    </div>`).join('');

const pads = ['Maracas', 'Cymbal', 'Cow Bell', 'Claves', 'Low Tom', 'Mid Tom', 'Open Hi Hat', 'Hi Tom', 'Low Conga', 'Mid Conga', 'Closed Hi Hat', 'Hi Conga', 'Bass Drum', 'Rim Shot', 'Snare Drum', 'Hand Clap'];
$('pads').innerHTML = pads.map(name =>
    `<div class="pad"><h3>${name}</h3><div><button>M</button><button class="dim">▶</button><button>S</button></div></div>`).join('');
```
